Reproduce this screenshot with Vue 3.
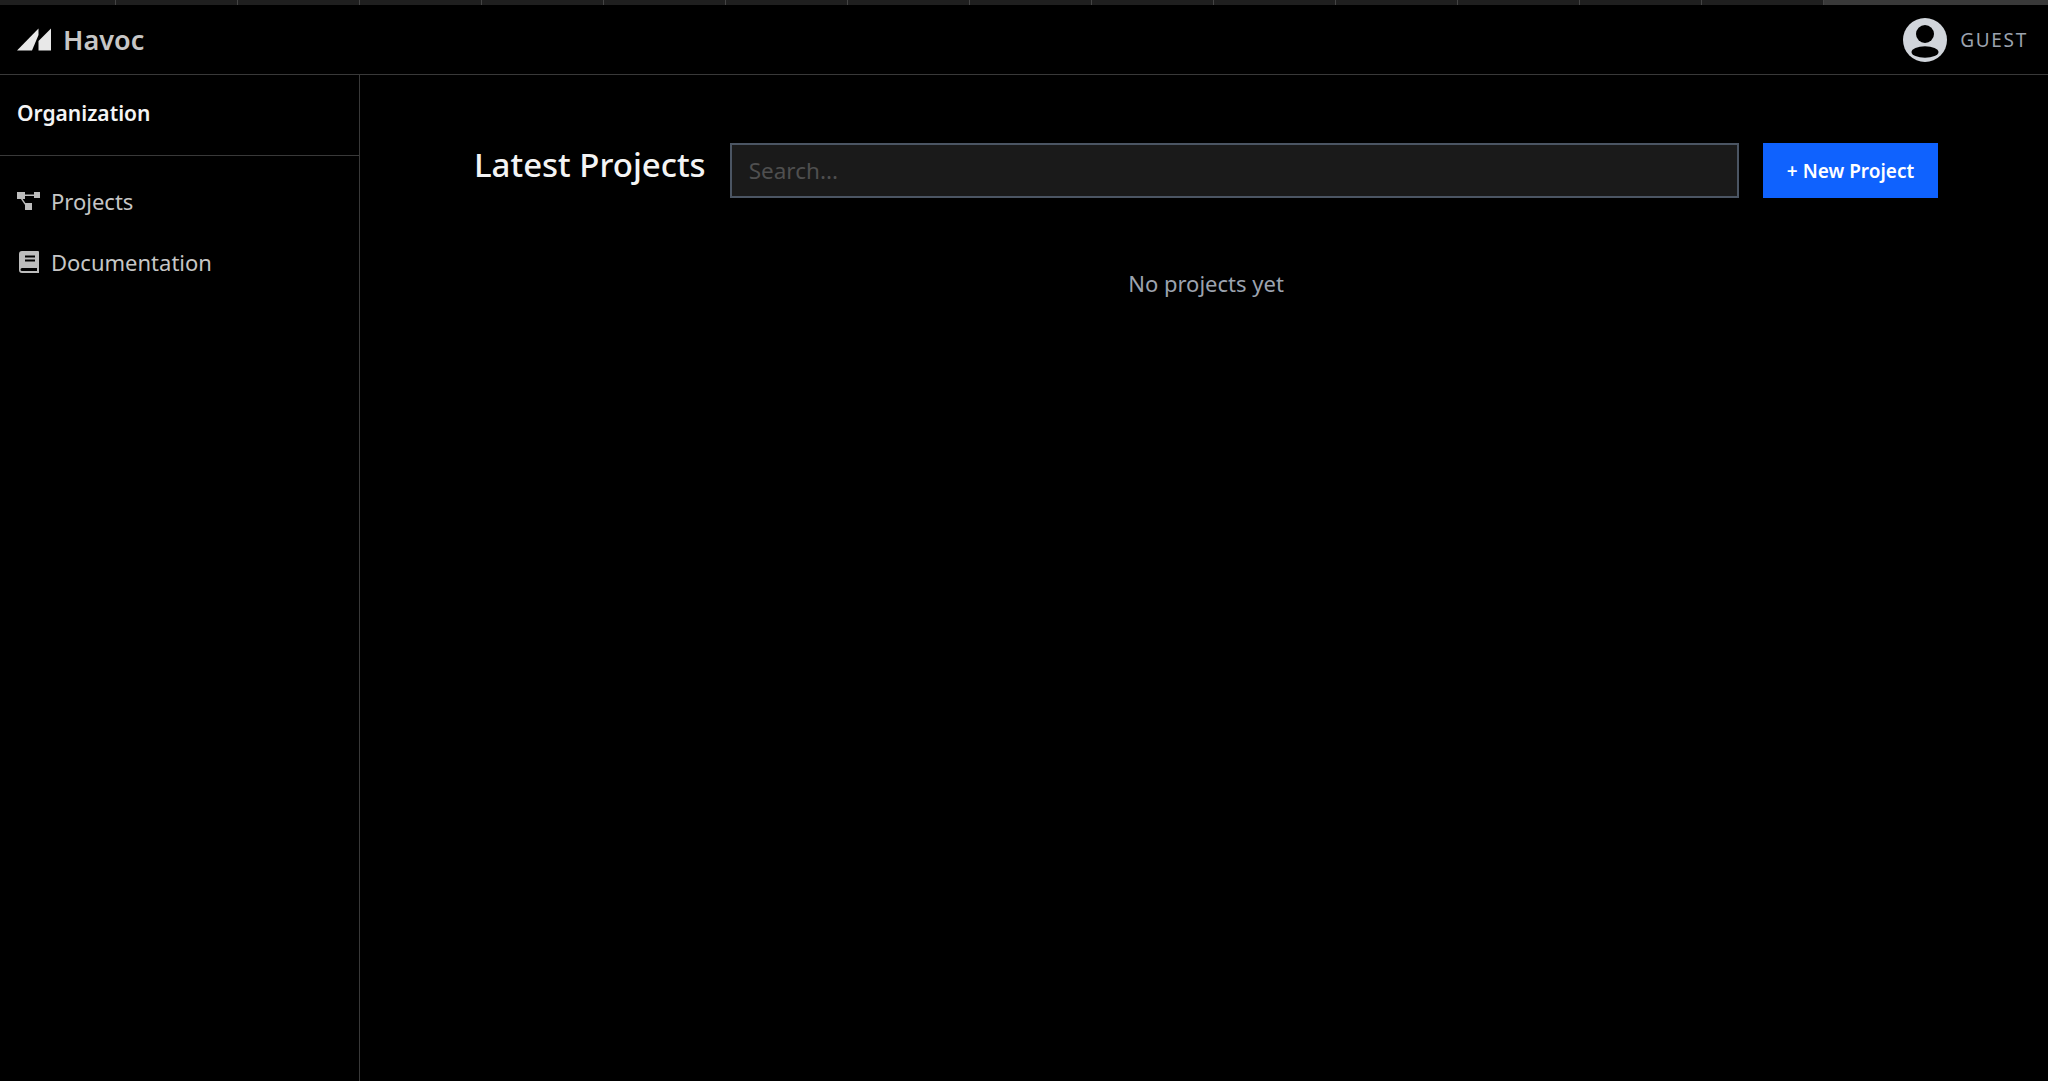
<script setup>
const segments = Array.from({ length: 16 }, (_, i) => i)
</script>

<template>
  <div class="page">
    <div class="strip">
      <div v-for="s in segments" :key="s" class="seg" :class="{ last: s === 15 }"></div>
    </div>
    <header class="topbar">
      <div class="brand">
        <svg class="logo" width="35" height="23" viewBox="0 0 35 23">
          <path d="M0 22.500 L21.500 0.500 V7 L15 22.500 Z" fill="#e8e8e8" />
          <path d="M21.500 22.500 V13 L34 0.500 V22.500 Z" fill="#e8e8e8" />
        </svg>
        <span class="brand-name">Havoc</span>
      </div>
      <div class="user">
        <svg width="44" height="44" viewBox="0 0 44 44">
          <circle cx="22" cy="22" r="22" fill="#d1d5db" />
          <circle cx="22" cy="16" r="9" fill="#000" />
          <ellipse cx="22" cy="34" rx="13.500" ry="5.800" fill="#000" />
        </svg>
        <span class="user-name">GUEST</span>
      </div>
    </header>
    <div class="body">
      <aside class="sidebar">
        <div class="org">Organization</div>
        <nav class="nav">
          <a class="nav-item">
            <svg width="24" height="20" viewBox="0 0 24 20" fill="#bdbdbd">
              <rect x="0" y="1" width="8" height="7" />
              <rect x="17" y="1" width="6" height="6" />
              <rect x="8" y="12" width="7" height="7" />
              <path d="M7 3.500h11v1.500H7z" />
              <path d="M5 7l4 6-1.200 .8-4-6z" />
            </svg>
            <span>Projects</span>
          </a>
          <a class="nav-item">
            <svg width="24" height="24" viewBox="0 0 24 24">
              <path fill-rule="evenodd" fill="#bdbdbd" d="M5 1h16a1 1 0 0 1 1 1v21H5a3 3 0 0 1-3-3V4a3 3 0 0 1 3-3zM8 5.500v2h10v-2zM8 9.500v2h10v-2zM5 18a1.500 1.500 0 0 0 0 3h15v-3z" />
            </svg>
            <span>Documentation</span>
          </a>
        </nav>
      </aside>
      <main class="main">
        <div class="head">
          <h1 class="title">Latest Projects</h1>
          <input class="search" placeholder="Search..." />
          <button class="new">+ New Project</button>
        </div>
        <p class="empty">No projects yet</p>
      </main>
    </div>
  </div>
</template>

<style>
html, body { margin: 0; background: #000; }
</style>

<style scoped>
.page {
  width: 2048px;
  height: 1081px;
  background: #000;
  display: flex;
  flex-direction: column;
  font-family: "Noto Sans", sans-serif;
  overflow: hidden;
}
.strip { display: flex; height: 5px; flex: none; background: #1f1f1f; }
.seg { width: 122px; flex: none; box-sizing: border-box; border-right: 1px solid #444; }
.seg:first-child { width: 116px; }
.seg.last { flex: 1; background: #393939; border-right: 0; }
.topbar {
  height: 70px;
  flex: none;
  box-sizing: border-box;
  border-bottom: 1px solid #393939;
  display: flex;
  align-items: center;
  justify-content: space-between;
  padding: 0 20px 0 17px;
}
.brand { display: flex; align-items: center; gap: 11px; }
.brand-name { font-size: 27px; font-weight: 600; color: #c6c6c6; }
.user { display: flex; align-items: center; gap: 13px; }
.user-name { font-size: 19px; letter-spacing: 1.700px; color: #9ca3af; }
.body { flex: 1; display: flex; min-height: 0; }
.sidebar {
  width: 360px;
  flex: none;
  box-sizing: border-box;
  border-right: 1px solid #393939;
}
.org {
  height: 81px;
  box-sizing: border-box;
  padding: 24px 17px 0;
  border-bottom: 1px solid #393939;
  font-size: 21px;
  font-weight: 600;
  color: #f4f4f4;
}
.nav { padding-top: 14px; display: flex; flex-direction: column; }
.nav-item {
  height: 61px;
  display: flex;
  align-items: center;
  gap: 10px;
  padding-left: 17px;
  font-size: 22px;
  color: #c6c6c6;
}
.main { flex: 1; min-width: 0; padding: 68px 110px 0 114px; }
.head { display: flex; align-items: center; gap: 24px; height: 55px; }
.title { margin: 0 0 11px; font-size: 33px; line-height: 44px; font-weight: 500; color: #f4f4f4; white-space: nowrap; }
.search {
  flex: 1;
  min-width: 0;
  height: 55px;
  box-sizing: border-box;
  background: #1a1a1a;
  border: 2px solid #4b5563;
  padding: 0 17px;
  font: 22.500px "Noto Sans", sans-serif;
  color: #f4f4f4;
  outline: none;
}
.search::placeholder { color: #4f4f4f; }
.new {
  width: 175px;
  height: 55px;
  flex: none;
  border: 0;
  background: #0f62fe;
  color: #fff;
  font: 600 19px "Noto Sans", sans-serif;
}
.empty { margin: 70px 0 0; text-align: center; font-size: 22px; color: #9ca3af; }
</style>
